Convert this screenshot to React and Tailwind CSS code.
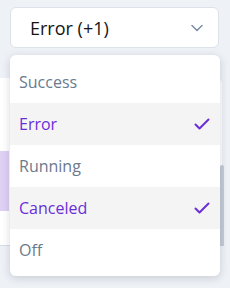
import React from 'react';

const options = [
  { label: 'Success', selected: false },
  { label: 'Error', selected: true },
  { label: 'Running', selected: false },
  { label: 'Canceled', selected: true },
  { label: 'Off', selected: false },
];

function Check() {
  return (
    <svg width="16" height="12" viewBox="0 0 16 12" fill="none">
      <path d="M1.5 6.5 L5.5 10.5 L14.5 1.5" stroke="#6a2ed8" strokeWidth="2" strokeLinecap="round" strokeLinejoin="round" />
    </svg>
  );
}

function Chevron() {
  return (
    <svg width="12" height="8" viewBox="0 0 12 8" fill="none">
      <path d="M1 1.5 L6 6.5 L11 1.5" stroke="#7d8ca3" strokeWidth="1.5" strokeLinecap="round" strokeLinejoin="round" />
    </svg>
  );
}

export default function App() {
  return (
    <div className="relative w-[230px] h-[288px] overflow-hidden bg-[#eef1f6] font-['Open_Sans',sans-serif]">
      {/* trigger */}
      <div className="h-[78px] pt-[7px] pl-[10px] pr-[11px]">
        <button className="w-full h-[41px] flex items-center justify-between pl-[19px] pr-[15px] bg-white border border-[#dde2ea] rounded-[6px]">
          <span className="text-[18px] text-[#141414] leading-none">Error (+1)</span>
          <Chevron />
        </button>
      </div>

      {/* page behind */}
      <div className="flex">
        <div className="w-[222px] h-[168px] bg-white rounded-tr-[6px] border-b border-[#d6dde7] flex flex-col">
          <div className="h-[73px]" />
          <div className="w-[9px] h-[60px] bg-[#ddd0f3]" />
        </div>
        <div className="flex-1 flex flex-col">
          <div className="h-[87px]" />
          <div className="w-[4px] -ml-[2px] flex-1 h-[123px] bg-[#c3ccd6] rounded-t-[3px]" />
        </div>
      </div>

      {/* dropdown menu */}
      <div className="absolute left-[10px] top-[55px] w-[210px] pt-[6px] pb-[5px] bg-white rounded-[6px] shadow-[0_2px_8px_rgba(30,40,60,0.18)]">
        {options.map((o) => (
          <div
            key={o.label}
            className={`h-[42px] flex items-center justify-between pl-[9px] pr-[10px] ${o.selected ? 'bg-[#f4f4f5]' : ''}`}
          >
            <span className={`text-[16px] leading-none ${o.selected ? 'text-[#6a2ed8]' : 'text-[#6b7a8d]'}`}>{o.label}</span>
            {o.selected && <Check />}
          </div>
        ))}
      </div>
    </div>
  );
}
